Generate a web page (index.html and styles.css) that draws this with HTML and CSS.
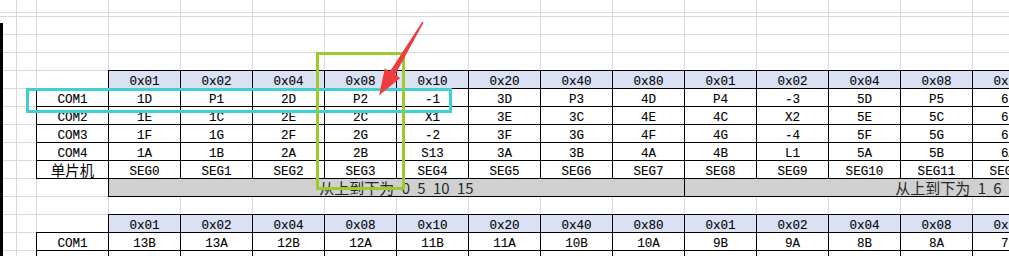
FILE: index.html
```html
<!DOCTYPE html>
<html>
<head>
<meta charset="utf-8">
<link rel="stylesheet" href="styles.css">
</head>
<body>
<div class="sheet">
  <div class="tbl">
    <div class="row">
      <div class="c e rb"></div>
      <div class="c h">0x01</div><div class="c h">0x02</div><div class="c h">0x04</div><div class="c h">0x08</div>
      <div class="c h">0x10</div><div class="c h">0x20</div><div class="c h">0x40</div><div class="c h">0x80</div>
      <div class="c h">0x01</div><div class="c h">0x02</div><div class="c h">0x04</div><div class="c h">0x08</div>
      <div class="c h">0x10</div>
    </div>
    <div class="row">
      <div class="c l">COM1</div>
      <div class="c">1D</div><div class="c">P1</div><div class="c">2D</div><div class="c">P2</div>
      <div class="c">-1</div><div class="c">3D</div><div class="c">P3</div><div class="c">4D</div>
      <div class="c">P4</div><div class="c">-3</div><div class="c">5D</div><div class="c">P5</div>
      <div class="c">6D</div>
    </div>
    <div class="row">
      <div class="c l">COM2</div>
      <div class="c">1E</div><div class="c">1C</div><div class="c">2E</div><div class="c">2C</div>
      <div class="c">X1</div><div class="c">3E</div><div class="c">3C</div><div class="c">4E</div>
      <div class="c">4C</div><div class="c">X2</div><div class="c">5E</div><div class="c">5C</div>
      <div class="c">6E</div>
    </div>
    <div class="row">
      <div class="c l">COM3</div>
      <div class="c">1F</div><div class="c">1G</div><div class="c">2F</div><div class="c">2G</div>
      <div class="c">-2</div><div class="c">3F</div><div class="c">3G</div><div class="c">4F</div>
      <div class="c">4G</div><div class="c">-4</div><div class="c">5F</div><div class="c">5G</div>
      <div class="c">6F</div>
    </div>
    <div class="row">
      <div class="c l">COM4</div>
      <div class="c">1A</div><div class="c">1B</div><div class="c">2A</div><div class="c">2B</div>
      <div class="c">S13</div><div class="c">3A</div><div class="c">3B</div><div class="c">4A</div>
      <div class="c">4B</div><div class="c">L1</div><div class="c">5A</div><div class="c">5B</div>
      <div class="c">6A</div>
    </div>
    <div class="row">
      <div class="c l cjk">单片机</div>
      <div class="c">SEG0</div><div class="c">SEG1</div><div class="c">SEG2</div><div class="c">SEG3</div>
      <div class="c">SEG4</div><div class="c">SEG5</div><div class="c">SEG6</div><div class="c">SEG7</div>
      <div class="c">SEG8</div><div class="c">SEG9</div><div class="c">SEG10</div><div class="c">SEG11</div>
      <div class="c">SEG12</div>
    </div>
    <div class="row">
      <div class="c e r"></div>
      <div class="c g note">从上到下为 0 5 10 15</div>
      <div class="c g note">从上到下为 1 6 11 16</div>
    </div>
  </div>

  <div class="tbl tbl2">
    <div class="row">
      <div class="c e rb"></div>
      <div class="c h">0x01</div><div class="c h">0x02</div><div class="c h">0x04</div><div class="c h">0x08</div>
      <div class="c h">0x10</div><div class="c h">0x20</div><div class="c h">0x40</div><div class="c h">0x80</div>
      <div class="c h">0x01</div><div class="c h">0x02</div><div class="c h">0x04</div><div class="c h">0x08</div>
      <div class="c h">0x10</div>
    </div>
    <div class="row">
      <div class="c l">COM1</div>
      <div class="c">13B</div><div class="c">13A</div><div class="c">12B</div><div class="c">12A</div>
      <div class="c">11B</div><div class="c">11A</div><div class="c">10B</div><div class="c">10A</div>
      <div class="c">9B</div><div class="c">9A</div><div class="c">8B</div><div class="c">8A</div>
      <div class="c">7B</div>
    </div>
    <div class="row">
      <div class="c l">COM2</div>
      <div class="c"></div><div class="c"></div><div class="c"></div><div class="c"></div>
      <div class="c"></div><div class="c"></div><div class="c"></div><div class="c"></div>
      <div class="c"></div><div class="c"></div><div class="c"></div><div class="c"></div>
      <div class="c"></div>
    </div>
  </div>

  <div class="edge"></div>
  <div class="box-cyan"></div>
  <div class="box-green"></div>
  <svg class="arrow" width="1009" height="256" viewBox="0 0 1009 256">
    <polygon fill="#ee3d3d" points="422.4,21.6 389.9,71.6 384.8,68.5 379,95.5 400.2,77.9 395.1,74.8 423.6,22.4"/>
  </svg>
</div>
</body>
</html>
```
FILE: styles.css
```css
html, body {
  margin: 0;
  padding: 0;
}
body {
  width: 1009px;
  height: 256px;
  overflow: hidden;
  background: #fff;
}
.sheet {
  position: relative;
  width: 1100px;
  height: 256px;
  box-sizing: border-box;
  padding: 71px 0 0 37px;
  background-color: #fff;
  background-image:
    repeating-linear-gradient(to right, #d9d9d9 0 1px, transparent 1px 72px),
    repeating-linear-gradient(to bottom, #d9d9d9 0 1px, transparent 1px 18px);
  background-position: 36px 0, 0 16px;
  overflow: hidden;
}
.tbl {
  display: flex;
  flex-direction: column;
}
.tbl2 {
  margin-top: 18px;
}
.row {
  display: flex;
  height: 18px;
}
.c {
  flex: 0 0 72px;
  width: 72px;
  height: 18px;
  box-sizing: border-box;
  border-right: 1px solid #000;
  border-bottom: 1px solid #000;
  text-align: center;
  white-space: nowrap;
  font-family: "Liberation Mono", monospace;
  font-size: 12.6px;
  line-height: 22px;
  color: #000;
  -webkit-text-stroke: 0.1px #000;
}
.c.e {
  border: none;
}
.c.e.r {
  border-right: 1px solid #000;
}
.c.e.rb {
  border-right: 1px solid #000;
  border-bottom: 1px solid #000;
}
.c.h {
  background: #d9e1f2;
  box-shadow: 0 -1px 0 #000, -1px -1px 0 #000;
}
.c.l {
  box-shadow: -1px 0 0 #000, -1px -1px 0 #000;
}
.c.cjk {
  font-family: "Noto Sans CJK SC", sans-serif;
  font-size: 14.5px;
  font-weight: 400;
  line-height: 17px;
  -webkit-text-stroke: 0;
}
.c.g {
  flex: 0 0 576px;
  width: 576px;
  background: #d0d0d0;
}
.c.note {
  font-family: "Noto Sans CJK SC", sans-serif;
  font-size: 15px;
  font-weight: 400;
  line-height: 17px;
  word-spacing: 4px;
  color: #2a2a2a;
  -webkit-text-stroke: 0;
}
.edge {
  position: absolute;
  left: 0;
  top: 23px;
  width: 3px;
  height: 233px;
  background: #000;
}
.box-cyan {
  position: absolute;
  left: 26px;
  top: 88px;
  width: 426px;
  height: 25px;
  box-sizing: border-box;
  border: 3px solid #3fcfd6;
}
.box-green {
  position: absolute;
  left: 316px;
  top: 52px;
  width: 89px;
  height: 138px;
  box-sizing: border-box;
  border: 3px solid #9bc92e;
}
.arrow {
  position: absolute;
  left: 0;
  top: 0;
}
```
